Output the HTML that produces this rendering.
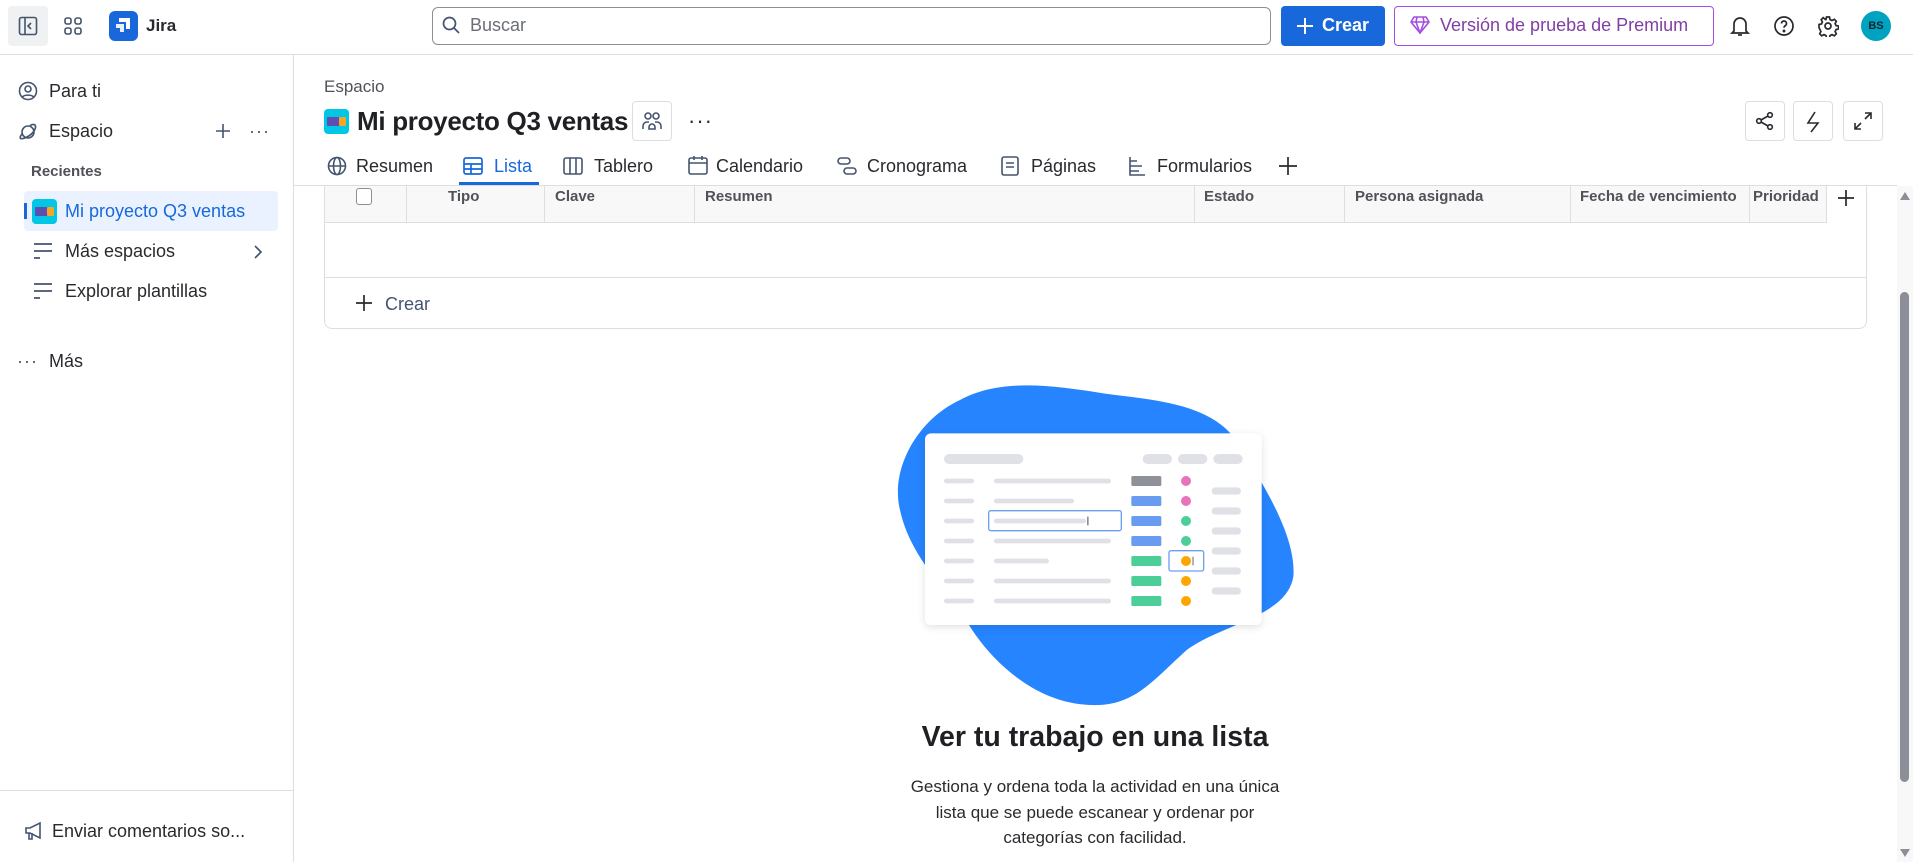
<!DOCTYPE html>
<html><head><meta charset="utf-8"><style>
*{box-sizing:border-box;margin:0;padding:0}
body{width:1913px;height:862px;overflow:hidden;background:#fff;font-family:"Liberation Sans",sans-serif;color:#292a2e;position:relative}
.a{position:absolute}
.ic{position:absolute}
.t{position:absolute;white-space:nowrap}
</style></head><body>
<!-- top bar -->
<div class="a" style="left:0;top:0;width:1913px;height:55px;border-bottom:1px solid #dddee1"></div>
<div class="a" style="left:8px;top:6px;width:40px;height:40px;background:#f0f1f2;border-radius:4px"></div>
<svg class="ic" style="left:18px;top:16px" width="20" height="20" viewBox="0 0 20 20" fill="none" stroke="#44546f" stroke-width="1.6"><rect x="1.5" y="1.5" width="17" height="17" rx="2"/><line x1="7" y1="2" x2="7" y2="18"/><path d="M13 7l-3 3 3 3"/></svg>
<svg class="ic" style="left:63px;top:16px" width="20" height="20" viewBox="0 0 20 20" fill="none" stroke="#44546f" stroke-width="1.6"><rect x="2" y="2" width="6" height="6" rx="2"/><rect x="12" y="2" width="6" height="6" rx="2"/><rect x="2" y="12" width="6" height="6" rx="2"/><rect x="12" y="12" width="6" height="6" rx="2"/></svg>
<div class="a" style="left:109px;top:11px;width:29px;height:30px;background:#1868db;border-radius:6px"></div>
<svg class="ic" style="left:113px;top:15px" width="21" height="22" viewBox="0 0 21 22" fill="#fff"><path d="M6 3h11v11h-4V7H6z"/><path d="M3 9h8v8H7v-4H3z" opacity=".9"/></svg>
<div class="t" style="left:146px;top:16px;font-size:17px;font-weight:bold;color:#292a2e">Jira</div>
<div class="a" style="left:432px;top:7px;width:839px;height:38px;border:1px solid #8c8f97;border-radius:6px"></div>
<svg class="ic" style="left:441px;top:15px" width="20" height="20" viewBox="0 0 20 20" fill="none" stroke="#44546f" stroke-width="1.7"><circle cx="8.5" cy="8.5" r="6"/><path d="M13 13l5 5"/></svg>
<div class="t" style="left:470px;top:15px;font-size:18px;color:#6b6e76">Buscar</div>
<div class="a" style="left:1281px;top:6px;width:104px;height:40px;background:#1868db;border-radius:4px"></div>
<svg class="ic" style="left:1296px;top:17px" width="18" height="18" viewBox="0 0 18 18" stroke="#fff" stroke-width="2"><path d="M9 1v16M1 9h16"/></svg>
<div class="t" style="left:1322px;top:15px;font-size:18px;color:#fff;font-weight:bold">Crear</div>
<div class="a" style="left:1394px;top:6px;width:320px;height:40px;border:1px solid #a54ee1;border-radius:4px"></div>
<svg class="ic" style="left:1410px;top:16px" width="20" height="18" viewBox="0 0 20 18" fill="none" stroke="#a54ee1" stroke-width="1.6"><path d="M4 1h12l3 5-9 11L1 6z"/><path d="M1 6h18M7 1L6 6l4 11 4-11-1-5"/></svg>
<div class="t" style="left:1440px;top:15px;font-size:18px;color:#803fa5">Versión de prueba de Premium</div>
<svg class="ic" style="left:1729px;top:14px" width="22" height="24" viewBox="0 0 22 24" fill="none" stroke="#292a2e" stroke-width="1.7"><path d="M5 17V10a6 6 0 0112 0v7l2 2H3z"/><path d="M9 21h4"/></svg>
<svg class="ic" style="left:1773px;top:15px" width="22" height="22" viewBox="0 0 22 22" fill="none" stroke="#292a2e" stroke-width="1.7"><circle cx="11" cy="11" r="9"/><path d="M8.5 8.5a2.5 2.5 0 114 2c-1 .6-1.5 1-1.5 2.3"/><circle cx="11" cy="16" r=".6" fill="#292a2e"/></svg>
<svg class="ic" style="left:1817px;top:15px" width="22" height="22" viewBox="0 0 22 22" fill="none" stroke="#292a2e" stroke-width="1.7"><circle cx="11" cy="11" r="3"/><path d="M9.5 2h3l.5 2.5 2 1 2.3-1.2 2 2-1.2 2.3 1 2 2.4.4v3l-2.4.5-1 2 1.2 2.3-2 2-2.3-1.2-2 1-.5 2.4h-3l-.5-2.4-2-1-2.3 1.2-2-2 1.2-2.3-1-2L2 12.5v-3l2.4-.5 1-2-1.2-2.3 2-2L8.5 4.6l.5-.1z"/></svg>
<div class="a" style="left:1861px;top:11px;width:30px;height:30px;border-radius:50%;background:#00a3bf;color:#123;font-size:11px;font-weight:bold;text-align:center;line-height:30px">BS</div>
<!-- sidebar -->
<div class="a" style="left:293px;top:55px;width:1px;height:807px;background:#dddee1"></div>
<svg class="ic" style="left:18px;top:81px" width="20" height="20" viewBox="0 0 20 20" fill="none" stroke="#44546f" stroke-width="1.6"><circle cx="10" cy="10" r="8.5"/><circle cx="10" cy="8" r="3"/><path d="M4.5 16c1.5-2.5 9.5-2.5 11 0"/></svg>
<div class="t" style="left:49px;top:81px;font-size:18px">Para ti</div>
<svg class="ic" style="left:18px;top:122px" width="20" height="20" viewBox="0 0 20 20" fill="none" stroke="#44546f" stroke-width="1.6"><circle cx="10" cy="10" r="6"/><path d="M4 12C0 17 3 18 9 15s10-9 8-12c-1-1-3-.5-5 .5"/></svg>
<div class="t" style="left:49px;top:121px;font-size:18px">Espacio</div>
<svg class="ic" style="left:215px;top:123px" width="16" height="16" viewBox="0 0 16 16" stroke="#44546f" stroke-width="1.6"><path d="M8 1v14M1 8h14"/></svg>
<div class="t" style="left:249px;top:121px;font-size:18px;color:#44546f;letter-spacing:1px">···</div>
<div class="t" style="left:31px;top:163px;font-size:15px;font-weight:bold;color:#505258">Recientes</div>
<div class="a" style="left:24px;top:191px;width:254px;height:40px;background:#e9f2fe;border-radius:4px"></div>
<div class="a" style="left:24px;top:203px;width:3px;height:16px;background:#1868db"></div>
<div class="a" style="left:32px;top:199px;width:25px;height:25px;background:#00c7e6;border-radius:4px"></div>
<div class="a" style="left:35px;top:207px;width:13px;height:9px;background:#5e4db2;border-radius:1px"></div>
<div class="a" style="left:47px;top:207px;width:7px;height:9px;background:#f5a623;border-radius:1px"></div>
<div class="t" style="left:65px;top:201px;font-size:18px;color:#1868db">Mi proyecto Q3 ventas</div>
<svg class="ic" style="left:33px;top:242px" width="20" height="18" viewBox="0 0 20 18" stroke="#44546f" stroke-width="1.7"><path d="M1 2h18M1 9h18M1 16h6"/></svg>
<div class="t" style="left:65px;top:241px;font-size:18px">Más espacios</div>
<svg class="ic" style="left:253px;top:244px" width="10" height="16" viewBox="0 0 10 16" fill="none" stroke="#44546f" stroke-width="1.7"><path d="M2 2l6 6-6 6"/></svg>
<svg class="ic" style="left:33px;top:282px" width="20" height="18" viewBox="0 0 20 18" stroke="#44546f" stroke-width="1.7"><path d="M1 2h18M1 9h18M1 16h6"/></svg>
<div class="t" style="left:65px;top:281px;font-size:18px">Explorar plantillas</div>
<div class="t" style="left:17px;top:351px;font-size:18px;color:#44546f;letter-spacing:1px">···</div>
<div class="t" style="left:49px;top:351px;font-size:18px">Más</div>
<div class="a" style="left:0;top:790px;width:293px;height:1px;background:#dddee1"></div>
<svg class="ic" style="left:24px;top:821px" width="20" height="20" viewBox="0 0 20 20" fill="none" stroke="#44546f" stroke-width="1.6"><path d="M2 7h4l10-5v15L6 12H2z"/><path d="M5 12v6h3v-6"/></svg>
<div class="t" style="left:52px;top:821px;font-size:18px">Enviar comentarios so...</div>
<!-- main header -->
<div class="t" style="left:324px;top:77px;font-size:17px;color:#505258">Espacio</div>
<div class="a" style="left:324px;top:109px;width:25px;height:25px;background:#00c7e6;border-radius:4px"></div>
<div class="a" style="left:327px;top:117px;width:13px;height:9px;background:#5e4db2;border-radius:1px"></div>
<div class="a" style="left:339px;top:117px;width:7px;height:9px;background:#f5a623;border-radius:1px"></div>
<div class="t" style="left:357px;top:106px;font-size:26px;font-weight:bold;color:#1f2024;letter-spacing:-0.3px">Mi proyecto Q3 ventas</div>
<div class="a" style="left:632px;top:101px;width:40px;height:40px;border:1px solid #dddee1;border-radius:4px"></div>
<svg class="ic" style="left:641px;top:110px" width="22" height="22" viewBox="0 0 22 22" fill="none" stroke="#44546f" stroke-width="1.6"><circle cx="7" cy="6" r="3"/><circle cx="15" cy="6" r="3"/><path d="M2 19v-3a4 4 0 014-4h2M20 19v-3a4 4 0 00-4-4h-2M8 19v-2a3 3 0 016 0v2z"/></svg>
<div class="t" style="left:688px;top:108px;font-size:22px;color:#292a2e;letter-spacing:1px">···</div>
<div class="a" style="left:1745px;top:101px;width:40px;height:40px;border:1px solid #dddee1;border-radius:4px"></div>
<svg class="ic" style="left:1755px;top:111px" width="20" height="20" viewBox="0 0 20 20" fill="none" stroke="#292a2e" stroke-width="1.6"><circle cx="15" cy="4" r="2.3"/><circle cx="4" cy="10" r="2.3"/><circle cx="15" cy="16" r="2.3"/><path d="M6 9l7-4M6 11l7 4"/></svg>
<div class="a" style="left:1793px;top:101px;width:40px;height:40px;border:1px solid #dddee1;border-radius:4px"></div>
<svg class="ic" style="left:1804px;top:111px" width="18" height="22" viewBox="0 0 18 22" fill="none" stroke="#292a2e" stroke-width="1.6"><path d="M11 1L4 12h10L7 21"/></svg>
<div class="a" style="left:1843px;top:101px;width:40px;height:40px;border:1px solid #dddee1;border-radius:4px"></div>
<svg class="ic" style="left:1853px;top:111px" width="20" height="20" viewBox="0 0 20 20" fill="none" stroke="#292a2e" stroke-width="1.6"><path d="M12 2h6v6M18 2l-6 6M8 18H2v-6M2 18l6-6"/></svg>
<!-- tabs -->
<svg class="ic" style="left:327px;top:156px" width="20" height="20" viewBox="0 0 20 20" fill="none" stroke="#44546f" stroke-width="1.6"><circle cx="10" cy="10" r="8.5"/><ellipse cx="10" cy="10" rx="3.5" ry="8.5"/><path d="M1.5 10h17"/></svg>
<div class="t" style="left:356px;top:156px;font-size:18px">Resumen</div>
<svg class="ic" style="left:463px;top:157px" width="20" height="18" viewBox="0 0 20 18" fill="none" stroke="#1868db" stroke-width="1.7"><rect x="1" y="1" width="18" height="16" rx="2"/><path d="M1 7h18M1 12h18M8 7v10"/></svg>
<div class="t" style="left:494px;top:156px;font-size:18px;color:#1868db">Lista</div>
<div class="a" style="left:459px;top:182px;width:80px;height:3px;background:#1868db"></div>
<svg class="ic" style="left:563px;top:157px" width="20" height="18" viewBox="0 0 20 18" fill="none" stroke="#44546f" stroke-width="1.6"><rect x="1" y="1" width="18" height="16" rx="2"/><path d="M7 1v16M13 1v16"/></svg>
<div class="t" style="left:594px;top:156px;font-size:18px">Tablero</div>
<svg class="ic" style="left:688px;top:155px" width="20" height="20" viewBox="0 0 20 20" fill="none" stroke="#44546f" stroke-width="1.6"><rect x="1" y="3" width="18" height="16" rx="2"/><path d="M1 8h18M6 1v4M14 1v4"/></svg>
<div class="t" style="left:716px;top:156px;font-size:18px">Calendario</div>
<svg class="ic" style="left:837px;top:157px" width="20" height="18" viewBox="0 0 20 18" fill="none" stroke="#44546f" stroke-width="1.6"><rect x="1" y="1" width="12" height="6" rx="3"/><rect x="7" y="11" width="12" height="6" rx="3"/></svg>
<div class="t" style="left:867px;top:156px;font-size:18px">Cronograma</div>
<svg class="ic" style="left:1001px;top:156px" width="18" height="20" viewBox="0 0 18 20" fill="none" stroke="#44546f" stroke-width="1.6"><rect x="1" y="1" width="16" height="18" rx="2"/><path d="M5 7h8M5 11h8"/></svg>
<div class="t" style="left:1031px;top:156px;font-size:18px">Páginas</div>
<svg class="ic" style="left:1128px;top:156px" width="18" height="20" viewBox="0 0 18 20" fill="none" stroke="#44546f" stroke-width="1.6"><path d="M2 1v18h15M2 5h7M2 10h12M2 15h9"/></svg>
<div class="t" style="left:1157px;top:156px;font-size:18px">Formularios</div>
<svg class="ic" style="left:1278px;top:156px" width="20" height="20" viewBox="0 0 20 20" stroke="#292a2e" stroke-width="1.7"><path d="M10 1v18M1 10h18"/></svg>
<div class="a" style="left:293px;top:185px;width:1604px;height:1px;background:#dddee1"></div>
<!-- table -->
<div class="a" style="left:324px;top:185px;width:1543px;height:144px;border:1px solid #dddee1;border-top:none;border-radius:0 0 8px 8px"></div>
<div class="a" style="left:325px;top:186px;width:1501px;height:37px;background:#f8f8f8;border-bottom:1px solid #dddee1"></div>
<div class="a" style="left:325px;top:277px;width:1541px;height:1px;background:#dddee1"></div>
<div class="a" style="left:356px;top:188px;width:16px;height:17px;border:1.5px solid #8c8f97;border-radius:3px;background:#fff"></div>
<div class="a" style="left:406px;top:186px;width:1px;height:37px;background:#dddee1"></div>
<div class="a" style="left:544px;top:186px;width:1px;height:37px;background:#dddee1"></div>
<div class="a" style="left:694px;top:186px;width:1px;height:37px;background:#dddee1"></div>
<div class="a" style="left:1194px;top:186px;width:1px;height:37px;background:#dddee1"></div>
<div class="a" style="left:1344px;top:186px;width:1px;height:37px;background:#dddee1"></div>
<div class="a" style="left:1570px;top:186px;width:1px;height:37px;background:#dddee1"></div>
<div class="a" style="left:1749px;top:186px;width:1px;height:37px;background:#dddee1"></div>
<div class="a" style="left:1826px;top:186px;width:1px;height:37px;background:#dddee1"></div>
<div style="font-size:15px;font-weight:bold;color:#505258">
<div class="t" style="left:448px;top:188px">Tipo</div>
<div class="t" style="left:555px;top:188px">Clave</div>
<div class="t" style="left:705px;top:188px">Resumen</div>
<div class="t" style="left:1204px;top:188px">Estado</div>
<div class="t" style="left:1355px;top:188px">Persona asignada</div>
<div class="t" style="left:1580px;top:188px">Fecha de vencimiento</div>
<div class="t" style="left:1753px;top:188px;width:72px;overflow:hidden">Prioridad</div>
</div>
<svg class="ic" style="left:1837px;top:189px" width="18" height="18" viewBox="0 0 18 18" stroke="#292a2e" stroke-width="1.7"><path d="M9 1v16M1 9h16"/></svg>
<svg class="ic" style="left:355px;top:294px" width="18" height="18" viewBox="0 0 18 18" stroke="#292a2e" stroke-width="1.7"><path d="M9 1v16M1 9h16"/></svg>
<div class="t" style="left:385px;top:294px;font-size:18px;color:#44546f">Crear</div>
<!-- scrollbar -->
<div class="a" style="left:1897px;top:186px;width:16px;height:676px;background:#f8f8f8"></div>
<svg class="ic" style="left:1899px;top:191px" width="12" height="10" viewBox="0 0 12 10" fill="#8c8f97"><path d="M6 1l5 8H1z"/></svg>
<div class="a" style="left:1900px;top:292px;width:9px;height:490px;background:#8c8f97;border-radius:5px"></div>
<svg class="ic" style="left:1899px;top:848px" width="12" height="10" viewBox="0 0 12 10" fill="#8c8f97"><path d="M6 9l5-8H1z"/></svg>
<!-- illustration -->
<svg class="ic" style="left:850px;top:370px" width="460" height="340" viewBox="0 0 1380 1020">
<defs><filter id="s" x="-10%" y="-10%" width="120%" height="130%"><feDropShadow dx="0" dy="6" stdDeviation="12" flood-opacity=".12"/></filter></defs>
<path d="M150 420C120 300 200 150 330 90C450 25 600 45 760 70C910 90 1070 100 1150 200C1240 340 1340 500 1330 620C1310 740 1120 760 1010 840C900 940 850 1010 720 1005C560 1000 430 880 360 770C290 660 180 560 150 420Z" fill="#2684ff"/>
<rect x="225" y="190" width="1010" height="575" rx="18" fill="#fff" filter="url(#s)"/>
<g fill="#dfe1e6">
<rect x="282" y="252" width="238" height="30" rx="15"/>
<rect x="878" y="252" width="88" height="30" rx="15"/><rect x="984" y="252" width="88" height="30" rx="15"/><rect x="1090" y="252" width="88" height="30" rx="15"/>
<rect x="282" y="326" width="90" height="14" rx="7"/><rect x="432" y="326" width="351" height="14" rx="7"/>
<rect x="282" y="386" width="90" height="14" rx="7"/><rect x="432" y="386" width="240" height="14" rx="7"/>
<rect x="282" y="446" width="90" height="14" rx="7"/><rect x="432" y="446" width="276" height="14" rx="7"/>
<rect x="282" y="506" width="90" height="14" rx="7"/><rect x="432" y="506" width="351" height="14" rx="7"/>
<rect x="282" y="566" width="90" height="14" rx="7"/><rect x="432" y="566" width="165" height="14" rx="7"/>
<rect x="282" y="626" width="90" height="14" rx="7"/><rect x="432" y="626" width="351" height="14" rx="7"/>
<rect x="282" y="686" width="90" height="14" rx="7"/><rect x="432" y="686" width="351" height="14" rx="7"/>
<rect x="1085" y="352" width="88" height="22" rx="11"/><rect x="1085" y="412" width="88" height="22" rx="11"/><rect x="1085" y="472" width="88" height="22" rx="11"/><rect x="1085" y="532" width="88" height="22" rx="11"/><rect x="1085" y="592" width="88" height="22" rx="11"/><rect x="1085" y="652" width="88" height="22" rx="11"/>
</g>
<rect x="416" y="422" width="398" height="60" rx="6" fill="none" stroke="#6b9ff2" stroke-width="4"/>
<rect x="711" y="440" width="5" height="26" fill="#8c8f97"/>
<rect x="844" y="318" width="90" height="30" rx="5" fill="#8f9199"/>
<rect x="844" y="378" width="90" height="30" rx="5" fill="#699cf0"/>
<rect x="844" y="438" width="90" height="30" rx="5" fill="#699cf0"/>
<rect x="844" y="498" width="90" height="30" rx="5" fill="#699cf0"/>
<rect x="844" y="558" width="90" height="30" rx="5" fill="#4bce97"/>
<rect x="844" y="618" width="90" height="30" rx="5" fill="#4bce97"/>
<rect x="844" y="678" width="90" height="30" rx="5" fill="#4bce97"/>
<circle cx="1008" cy="333" r="15" fill="#e774bb"/><circle cx="1008" cy="393" r="15" fill="#e774bb"/>
<circle cx="1008" cy="453" r="15" fill="#4bce97"/><circle cx="1008" cy="513" r="15" fill="#4bce97"/>
<circle cx="1008" cy="573" r="15" fill="#ffa500"/><circle cx="1008" cy="633" r="15" fill="#ffa500"/><circle cx="1008" cy="693" r="15" fill="#ffa500"/>
<rect x="957" y="542" width="104" height="61" rx="6" fill="none" stroke="#6b9ff2" stroke-width="4"/>
<rect x="1027" y="560" width="4" height="26" fill="#8c8f97"/>
</svg>
<div class="t" style="left:595px;top:721px;width:1000px;text-align:center;font-size:28.5px;font-weight:bold;color:#1f2024">Ver tu trabajo en una lista</div>
<div class="a" style="left:795px;top:774px;width:600px;text-align:center;font-size:17px;line-height:25.5px;color:#292a2e">Gestiona y ordena toda la actividad en una única<br>lista que se puede escanear y ordenar por<br>categorías con facilidad.</div>
</body></html>
